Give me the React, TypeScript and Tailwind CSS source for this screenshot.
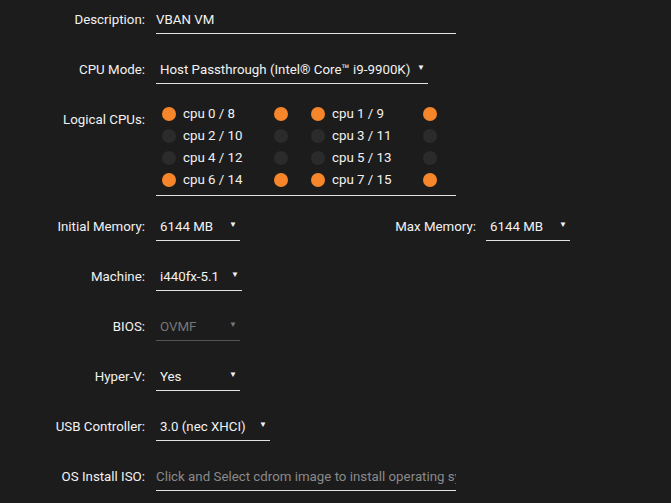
import React from 'react';

const cpus = [
  { a: 'cpu 0 / 8', b: 'cpu 1 / 9', on: true },
  { a: 'cpu 2 / 10', b: 'cpu 3 / 11', on: false },
  { a: 'cpu 4 / 12', b: 'cpu 5 / 13', on: false },
  { a: 'cpu 6 / 14', b: 'cpu 7 / 15', on: true },
];

function Dot({ on }: { on: boolean }) {
  return <span className={`inline-block w-[14px] h-[14px] rounded-full ${on ? 'bg-[#f7862b]' : 'bg-[#2b2b2b]'}`} />;
}

function Label({ children, className = '' }: { children: React.ReactNode; className?: string }) {
  return <div className={`w-[145px] shrink-0 text-right ${className}`}>{children}</div>;
}

function Select({ value, width, disabled = false }: { value: string; width: string; disabled?: boolean }) {
  return (
    <div
      className={`${width} h-[28px] flex items-center justify-between pl-[4px] pr-[3px] border-b ${
        disabled ? 'border-[#555] text-[#777]' : 'border-[#e2e2e2] text-[#f2f2f2]'
      }`}
    >
      <span>{value}</span>
      <span className="text-[8px] leading-none mb-[3px]">▼</span>
    </div>
  );
}

export default function App() {
  return (
    <div
      className="min-h-[503px] w-[671px] bg-[#1c1c1c] text-[#f2f2f2] text-[13.3px] pt-[6px]"
      style={{ fontFamily: 'Roboto, "Noto Sans", sans-serif' }}
    >
      {/* Description */}
      <div className="flex items-center gap-[11px]">
        <Label>Description:</Label>
        <div className="w-[300px] h-[28px] flex items-center border-b border-[#e2e2e2]">VBAN VM</div>
      </div>

      {/* CPU Mode */}
      <div className="flex items-center gap-[11px] mt-[22px]">
        <Label>CPU Mode:</Label>
        <Select value="Host Passthrough (Intel® Core™ i9-9900K)" width="w-[272px]" />
      </div>

      {/* Logical CPUs */}
      <div className="flex items-start gap-[11px] mt-[19px]">
        <Label className="mt-[6px] leading-[22px]">Logical CPUs:</Label>
        <div className="w-[300px] pl-[6px] pb-[4px] border-b border-[#e2e2e2]">
          {cpus.map((r) => (
            <div key={r.a} className="h-[22px] flex items-center gap-[23px]">
              <div className="w-[126px] flex items-center">
                <Dot on={r.on} />
                <span className="ml-[7px]">{r.a}</span>
                <span className="ml-auto flex"><Dot on={r.on} /></span>
              </div>
              <div className="w-[126px] flex items-center">
                <Dot on={r.on} />
                <span className="ml-[7px]">{r.b}</span>
                <span className="ml-auto flex"><Dot on={r.on} /></span>
              </div>
            </div>
          ))}
        </div>
      </div>

      {/* Memory */}
      <div className="flex items-center mt-[17px]">
        <Label>Initial Memory:</Label>
        <div className="ml-[11px]">
          <Select value="6144 MB" width="w-[84px]" />
        </div>
        <div className="w-[236px] text-right">Max Memory:</div>
        <div className="ml-[10px]">
          <Select value="6144 MB" width="w-[84px]" />
        </div>
      </div>

      <div className="flex items-center gap-[11px] mt-[22px]">
        <Label>Machine:</Label>
        <Select value="i440fx-5.1" width="w-[86px]" />
      </div>

      <div className="flex items-center gap-[11px] mt-[22px]">
        <Label>BIOS:</Label>
        <Select value="OVMF" width="w-[84px]" disabled />
      </div>

      <div className="flex items-center gap-[11px] mt-[22px]">
        <Label>Hyper-V:</Label>
        <Select value="Yes" width="w-[84px]" />
      </div>

      <div className="flex items-center gap-[11px] mt-[22px]">
        <Label>USB Controller:</Label>
        <Select value="3.0 (nec XHCI)" width="w-[114px]" />
      </div>

      <div className="flex items-center gap-[11px] mt-[22px]">
        <Label>OS Install ISO:</Label>
        <div className="w-[300px] h-[28px] flex items-center border-b border-[#e2e2e2] overflow-hidden whitespace-nowrap text-[#8a8a8a]">
          Click and Select cdrom image to install operating system
        </div>
      </div>
    </div>
  );
}
